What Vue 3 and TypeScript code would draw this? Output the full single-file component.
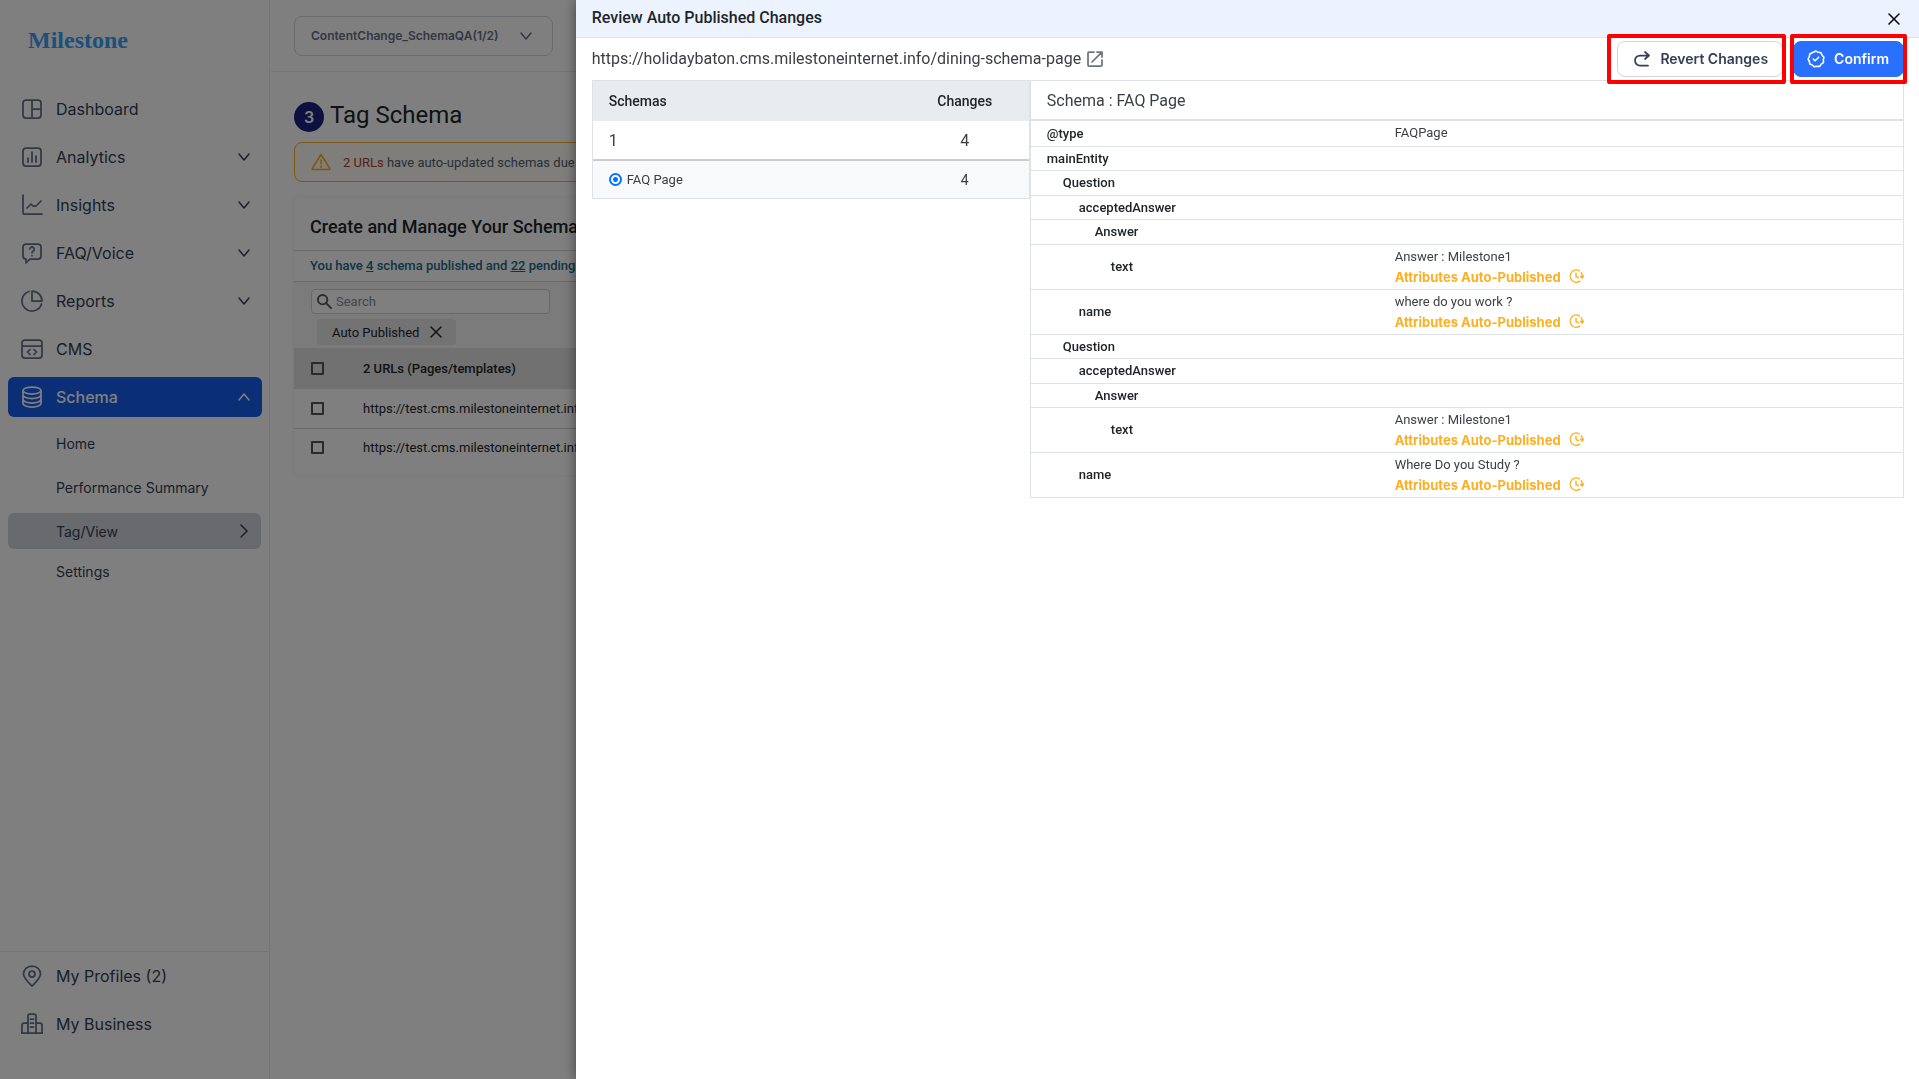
<script setup lang="ts">
import { ref } from 'vue'

interface NavItem {
  label: string
  icon: string
  chevron?: boolean
  active?: boolean
}

interface AttributeRow {
  name: string
  depth: number
  value?: string
  auto?: boolean
}

const navItems: NavItem[] = [
  { label: 'Dashboard', icon: 'dashboard' },
  { label: 'Analytics', icon: 'analytics', chevron: true },
  { label: 'Insights', icon: 'insights', chevron: true },
  { label: 'FAQ/Voice', icon: 'faq', chevron: true },
  { label: 'Reports', icon: 'reports', chevron: true },
  { label: 'CMS', icon: 'cms' },
  { label: 'Schema', icon: 'schema', chevron: true, active: true },
]

const footerItems: NavItem[] = [
  { label: 'My Profiles (2)', icon: 'pin' },
  { label: 'My Business', icon: 'business' },
]

const icons: Record<string, string> = {
  dashboard: 'M5 2h12a3 3 0 0 1 3 3v12a3 3 0 0 1-3 3H5a3 3 0 0 1-3-3V5a3 3 0 0 1 3-3zM11 2v18M11 11h9',
  analytics: 'M5 2h12a3 3 0 0 1 3 3v12a3 3 0 0 1-3 3H5a3 3 0 0 1-3-3V5a3 3 0 0 1 3-3zM7 12v4M11 6v10M15 10v6',
  insights: 'M2 1v18a1 1 0 0 0 1 1h18M6 14l4-4 2 2 3 0 5-5',
  faq: 'M5 2h12a3 3 0 0 1 3 3v9a3 3 0 0 1-3 3H9l-4 4v-4a3 3 0 0 1-3-3V5a3 3 0 0 1 3-3zM8.800 7a2.200 2.200 0 1 1 3.400 2q-1.200.6-1.200 1.800M11 13.500v.2',
  reports: 'M8 1.500A10 10 0 1 0 20.500 14M11 1v10h10A10 10 0 0 0 11 1z',
  cms: 'M4 2h14a3 3 0 0 1 3 3v12a3 3 0 0 1-3 3H4a3 3 0 0 1-3-3V5a3 3 0 0 1 3-3zM1 8h20M9 11.500l-2.500 2.500 2.500 2.500M13 11.500l2.500 2.500-2.500 2.500',
  schema: 'M2 4.500c0-2 4-3.500 9-3.500s9 1.500 9 3.500S16 8 11 8 2 6.500 2 4.500zM2 4.500v13c0 2 4 3.500 9 3.500s9-1.500 9-3.500v-13M2 9c0 2 4 3.500 9 3.500s9-1.500 9-3.500M2 13.500c0 2 4 3.500 9 3.500s9-1.500 9-3.500',
  pin: 'M11 21C7 17 2.500 13 2.500 9a8.500 8 0 0 1 17 0c0 4-4.500 8-8.500 12zM14 9a3 3 0 1 1-6 0 3 3 0 0 1 6 0z',
  business: 'M0 20h22M1 20v-8a2 2 0 0 1 2-2h4M21 20v-8a2 2 0 0 0-2-2h-4M7 20V3a2 2 0 0 1 2-2h4a2 2 0 0 1 2 2v17M9.500 6h3M9.500 10h3M9.500 14h3',
}

const pageUrls = [
  'https://test.cms.milestoneinternet.info/dining',
  'https://test.cms.milestoneinternet.info/events',
]

const rows: AttributeRow[] = [
  { name: '@type', depth: 0, value: 'FAQPage' },
  { name: 'mainEntity', depth: 0 },
  { name: 'Question', depth: 1 },
  { name: 'acceptedAnswer', depth: 2 },
  { name: 'Answer', depth: 3 },
  { name: 'text', depth: 4, value: 'Answer : Milestone1', auto: true },
  { name: 'name', depth: 2, value: 'where do you work ?', auto: true },
  { name: 'Question', depth: 1 },
  { name: 'acceptedAnswer', depth: 2 },
  { name: 'Answer', depth: 3 },
  { name: 'text', depth: 4, value: 'Answer : Milestone1', auto: true },
  { name: 'name', depth: 2, value: 'Where Do you Study ?', auto: true },
]

const search = ref('')
const schema = ref('faq')
</script>

<template>
  <div class="app">
    <aside class="sidebar">
      <a class="logo" href="#">Milestone</a>
      <nav class="nav">
        <a v-for="item in navItems" :key="item.label" href="#" class="nav-item" :class="{ active: item.active }">
          <svg class="nav-icon" viewBox="0 0 22 22"><path :d="icons[item.icon]" /></svg>
          <span class="nav-label">{{ item.label }}</span>
          <svg v-if="item.chevron" class="chevron" :class="{ up: item.active }" viewBox="0 0 14 14"><path d="M2 4l5 6 5-6" /></svg>
        </a>
        <div class="subnav">
          <a href="#" class="sub-item">Home</a>
          <a href="#" class="sub-item">Performance Summary</a>
          <a href="#" class="sub-item current">
            <span>Tag/View</span>
            <svg class="chevron" viewBox="0 0 14 14"><path d="M4 1l6 6-6 6" /></svg>
          </a>
          <a href="#" class="sub-item">Settings</a>
        </div>
      </nav>
      <div class="nav-footer">
        <a v-for="item in footerItems" :key="item.label" href="#" class="nav-item">
          <svg class="nav-icon" viewBox="0 0 22 22"><path :d="icons[item.icon]" /></svg>
          <span class="nav-label">{{ item.label }}</span>
        </a>
      </div>
    </aside>

    <main class="main">
      <header class="topbar">
        <div class="project">
          <select aria-label="Project">
            <option>ContentChange_SchemaQA(1/2)</option>
          </select>
          <svg class="chevron project-chevron" viewBox="0 0 14 14"><path d="M2 4l5 6 5-6" /></svg>
        </div>
      </header>

      <div class="content">
        <h1 class="page-title"><span class="step">3</span>Tag Schema</h1>
        <div class="alert">
          <svg class="alert-icon" viewBox="0 0 20 18"><path d="M10 1.500L1.200 15.500q-.5 1 .8 1h16q1.300 0 .8-1zM10 7v4M10 13v1.500" /></svg>
          <p><a href="#">2 URLs</a> have auto-updated schemas due to content changes</p>
        </div>

        <section class="card">
          <h2>Create and Manage Your Schemas</h2>
          <p class="summary">You have <a href="#">4</a> schema published and <a href="#">22</a> pending</p>
          <div class="filters">
            <label class="search">
              <svg viewBox="0 0 16 16"><circle cx="6" cy="6" r="5" /><path d="M9.500 9.500l5.500 5.500" /></svg>
              <input v-model="search" type="text" placeholder="Search" aria-label="Search" />
            </label>
            <button type="button" class="chip">
              Auto Published
              <svg viewBox="0 0 12 12"><path d="M1 1l10 10M11 1L1 11" /></svg>
            </button>
          </div>
          <table class="urls">
            <thead>
              <tr>
                <th class="tick"><input type="checkbox" aria-label="Select all" /></th>
                <th>2 URLs (Pages/templates)</th>
              </tr>
            </thead>
            <tbody>
              <tr v-for="url in pageUrls" :key="url">
                <td class="tick"><input type="checkbox" :aria-label="url" /></td>
                <td>{{ url }}</td>
              </tr>
            </tbody>
          </table>
        </section>
      </div>
    </main>

    <div class="scrim"></div>

    <section class="drawer" role="dialog" aria-labelledby="drawer-title">
      <header class="drawer-head">
        <h2 id="drawer-title">Review Auto Published Changes</h2>
        <button type="button" class="close" aria-label="Close">
          <svg viewBox="0 0 12 12"><path d="M1 1l10 10M11 1L1 11" /></svg>
        </button>
      </header>

      <div class="drawer-body">
        <div class="toolbar">
          <a class="page-url" href="#">
            <span>https://holidaybaton.cms.milestoneinternet.info/dining-schema-page</span>
            <svg viewBox="0 0 16 16"><path d="M7 1H2a1 1 0 0 0-1 1v12a1 1 0 0 0 1 1h12a1 1 0 0 0 1-1V9M10 1h5v5M15 1L5 11" /></svg>
          </a>
          <div class="actions">
            <div class="marked marked-wide">
              <button type="button" class="btn">
                <svg viewBox="0 0 18 18"><path d="M12 2l4 3.500-4 3.500M16 5.500H7a5 5 0 0 0 0 10h8" /></svg>
                Revert Changes
              </button>
            </div>
            <div class="marked">
              <button type="button" class="btn primary">
                <svg viewBox="0 0 20 20"><path d="M10 1.200l2.600 1.400 3 .5 1.200 2.700 2 2.200-.6 3 .1 3-2.500 1.700-1.700 2.500-3-.1-3 .6-2.300-2-2.700-1.200-.5-3L1.200 10l1.400-2.600.5-3 2.700-1.300zM7 10l2 2 4-4" /></svg>
                Confirm
              </button>
            </div>
          </div>
        </div>

        <div class="panes">
          <div class="pane-left">
            <table class="schemas">
              <thead>
                <tr><th>Schemas</th><th class="count">Changes</th></tr>
              </thead>
              <tbody>
                <tr class="total"><td>1</td><td class="count">4</td></tr>
                <tr class="selected">
                  <td>
                    <label class="choice"><input v-model="schema" type="radio" name="schema" value="faq" />FAQ Page</label>
                  </td>
                  <td class="count">4</td>
                </tr>
              </tbody>
            </table>
          </div>
          <div class="pane-right">
            <h3>Schema : FAQ Page</h3>
            <table class="attributes">
              <tbody>
                <tr v-for="(row, i) in rows" :key="i" :class="{ tall: row.auto }">
                  <th scope="row" :class="'depth-' + row.depth">{{ row.name }}</th>
                  <td>
                    <div>{{ row.value }}</div>
                    <div v-if="row.auto" class="auto">
                      Attributes Auto-Published
                      <svg viewBox="0 0 16 16"><path d="M11 2A6.500 6.500 0 1 0 11.500 13M13 4q1.500 1.800 1.500 4.200M12.500 7.800h3L14 9.800zM7.500 4.500V8l2.500 1.200" /></svg>
                    </div>
                  </td>
                </tr>
              </tbody>
            </table>
          </div>
        </div>
      </div>
    </section>
  </div>
</template>

<style>
body {
  margin: 0;
}
</style>

<style scoped>
* {
  box-sizing: border-box;
}
.app {
  display: flex;
  min-height: 100vh;
  background: #fff;
  color: #212529;
  font-family: Roboto, sans-serif;
  font-size: 13px;
  overflow: hidden;
}
h1, h2, h3, p {
  margin: 0;
}
a {
  color: inherit;
  text-decoration: none;
}
svg {
  fill: none;
  stroke: currentColor;
  flex: none;
  stroke-linecap: round;
  stroke-linejoin: round;
}
button {
  font: inherit;
  color: inherit;
  border: 0;
  padding: 0;
  background: none;
}
table {
  border-collapse: collapse;
  width: 100%;
}
th {
  text-align: left;
  font-weight: 500;
}
td, th {
  padding: 0;
}

/* Sidebar */
.sidebar {
  display: flex;
  flex-direction: column;
  width: 270px;
  flex: none;
  border-right: 1px solid #ececee;
  font-family: Inter, sans-serif;
  color: #344054;
}
.logo {
  padding: 20px 28px 0;
  height: 89px;
  font-family: "Liberation Serif", serif;
  font-weight: 700;
  font-size: 24px;
  line-height: 40px;
  color: #38a0f8;
}
.nav {
  flex: 1;
}
.nav-item {
  display: flex;
  align-items: center;
  gap: 13px;
  height: 40px;
  margin: 0 7px 8px 8px;
  padding: 0 11px 0 13px;
  border-radius: 6px;
  font-size: 16px;
}
.nav-item.active {
  background: #155eef;
  color: #fff;
  font-weight: 500;
}
.nav-icon {
  width: 22px;
  height: 22px;
  stroke-width: 1.75;
  stroke: #667085;
}
.active .nav-icon {
  stroke: #fff;
}
.nav-label {
  flex: 1;
}
.chevron {
  width: 14px;
  height: 14px;
  stroke-width: 1.5;
}
.up {
  transform: rotate(180deg);
}
.sub-item {
  display: flex;
  align-items: center;
  justify-content: space-between;
  height: 36px;
  margin: 0 8px 8px;
  padding: 0 10px 0 48px;
  border-radius: 6px;
  font-size: 14px;
}
.sub-item.current {
  background: #d0d5dd;
  margin-bottom: 4px;
}
.nav-footer {
  border-top: 1px solid #ececee;
  padding: 4px 0 27px;
}

/* Page behind the drawer */
.main {
  flex: 1;
  min-width: 0;
}
.topbar {
  height: 72px;
  padding: 16px 24px;
  border-bottom: 1px solid #ececee;
}
.project {
  position: relative;
  width: 259px;
}
.project select {
  appearance: none;
  width: 100%;
  height: 40px;
  padding: 0 40px 2px 16px;
  border: 1px solid #d0d5dd;
  border-radius: 8px;
  background: #fff;
  font: 600 12px Inter, sans-serif;
  color: #667085;
}
.project-chevron {
  position: absolute;
  right: 20px;
  top: 13px;
  color: #667085;
}
.content {
  padding: 26px 24px;
}
.page-title {
  display: flex;
  align-items: center;
  gap: 6px;
  height: 34px;
  font-size: 24px;
  font-weight: 400;
}
.step {
  width: 30px;
  height: 30px;
  margin-top: 4px;
  border-radius: 50%;
  background: #1a237e;
  color: #fff;
  font: 600 16px/30px Inter, sans-serif;
  text-align: center;
}
.alert {
  display: flex;
  align-items: center;
  gap: 12px;
  height: 40px;
  margin-top: 10px;
  padding: 0 16px;
  border: 1px solid #fdb022;
  border-radius: 8px;
  background: #fffcf5;
  color: #52616f;
  white-space: nowrap;
}
.alert a {
  color: #b8402c;
}
.alert-icon {
  width: 20px;
  height: 18px;
  stroke: #fdb022;
  stroke-width: 1.5;
}
.card {
  margin-top: 16px;
  padding-bottom: 8px;
  border-radius: 4px;
  box-shadow: 0 0 4px rgba(0, 0, 0, 0.08);
}
.card h2 {
  height: 52px;
  padding: 6px 16px 0;
  font-size: 18px;
  line-height: 46px;
  font-weight: 500;
}
.summary {
  height: 32px;
  padding: 0 16px;
  border-top: 1px solid #d5d5d5;
  border-bottom: 1px solid #d5d5d5;
  line-height: 30px;
  font-weight: 500;
  color: #1b6a8c;
}
.summary a {
  text-decoration: underline;
}
.filters {
  display: flex;
  flex-direction: column;
  align-items: flex-start;
  gap: 5px;
  height: 66px;
  padding: 7px 17px 0;
  background: #f7f7f7;
}
.search {
  display: flex;
  align-items: center;
  gap: 4px;
  width: 239px;
  height: 25px;
  padding: 0 6px 0 5px;
  border: 1px solid #ced4da;
  border-radius: 4px;
  background: #fff;
}
.search svg {
  width: 15px;
  height: 15px;
  stroke: #555;
  stroke-width: 2;
}
.search input {
  flex: 1;
  min-width: 0;
  border: 0;
  padding: 0;
  background: none;
  font: 13px Roboto, sans-serif;
}
.search input::placeholder {
  color: #868e96;
}
.chip {
  display: flex;
  align-items: center;
  gap: 11px;
  height: 26px;
  margin-left: 6px;
  padding: 0 14px 0 15px;
  border-radius: 4px;
  background: #e6e6e6;
}
.chip svg {
  width: 12px;
  height: 12px;
  stroke-width: 1.5;
}
.urls th {
  height: 41px;
  background: #e2e2e2;
}
.urls td {
  height: 39px;
}
.urls tbody tr + tr {
  border-top: 1px solid #d0d0d0;
}
.urls .tick {
  width: 69px;
  padding-left: 17px;
}
.urls input {
  appearance: none;
  display: block;
  width: 13px;
  height: 13px;
  margin: 0;
  border: 2px solid #555;
  border-radius: 1px;
}
.scrim {
  position: fixed;
  inset: 0;
  background: rgba(0, 0, 0, 0.5);
}

/* Drawer */
.drawer {
  position: fixed;
  top: 0;
  right: 0;
  bottom: 0;
  width: 70%;
  background: #fff;
  box-shadow: 0 0 12px rgba(0, 0, 0, 0.5);
}
.drawer-head {
  display: flex;
  align-items: center;
  justify-content: space-between;
  height: 38px;
  padding: 0 19px 0 16px;
  background: #ecf3ff;
  border-bottom: 1px solid #e0e4ea;
}
.drawer-head h2 {
  padding-bottom: 2px;
  font-size: 16px;
  line-height: 34px;
  font-weight: 500;
}
.close {
  width: 12px;
  height: 12px;
}
.close svg {
  display: block;
  stroke: #000;
  stroke-width: 1.5;
}
.drawer-body {
  padding: 0 15px 0 16px;
}
.toolbar {
  display: flex;
  justify-content: space-between;
  align-items: center;
  height: 42px;
}
.page-url {
  display: flex;
  align-items: center;
  gap: 6px;
  padding-bottom: 1px;
  font-size: 16px;
  color: #3a3f44;
}
.page-url svg {
  width: 16px;
  height: 16px;
  stroke: #6c757d;
  stroke-width: 1.75;
}
.actions {
  display: flex;
  gap: 10px;
}
.marked {
  position: relative;
}
.marked::after {
  content: "";
  position: absolute;
  inset: -7px -3px;
  border: 4px solid #f00;
  border-radius: 2px;
  pointer-events: none;
}
.marked-wide::after {
  left: -10px;
}
.btn {
  display: flex;
  align-items: center;
  gap: 9px;
  height: 36px;
  padding: 0 14px 1px 15px;
  border: 1px solid #d0d5dd;
  border-radius: 8px;
  background: #fff;
  color: #344054;
  font: 600 14px Inter, sans-serif;
}
.btn svg {
  width: 18px;
  height: 18px;
  stroke-width: 1.75;
}
.btn.primary {
  padding: 0 14px 1px 13px;
  border-color: #2970ff;
  background: #2970ff;
  color: #fff;
}
.panes {
  display: flex;
  align-items: flex-start;
}
.pane-left {
  flex: 1;
  border: 1px solid #dee2e6;
}
.pane-right {
  flex: 2;
  border: 1px solid #dee2e6;
}
.schemas th {
  height: 40px;
  background: #e9ecef;
}
.schemas th, .schemas td {
  padding-left: 16px;
  font-size: 14px;
}
.schemas .count {
  width: 128px;
  padding: 0;
  text-align: center;
}
.schemas .total td {
  height: 39px;
  font-size: 16px;
  color: #3a3f44;
  border-bottom: 2px solid #ccc;
}
.schemas .selected td {
  height: 38px;
  font-size: 14px;
  color: #3a3f44;
  background: #f8f9fa;
}
.choice {
  display: flex;
  align-items: center;
  gap: 5px;
  font-size: 13px;
}
.choice input {
  appearance: none;
  width: 13px;
  height: 13px;
  margin: 0;
  border: 2px solid #0075ff;
  border-radius: 50%;
}
.choice input:checked {
  background: radial-gradient(circle, #0075ff 2px, #fff 3px);
}
.pane-right h3 {
  height: 40px;
  padding-left: 16px;
  border-bottom: 2px solid #dee2e6;
  font-size: 16px;
  line-height: 39px;
  font-weight: 400;
  color: #3a3f44;
}
.attributes tr {
  height: 25px;
  border-bottom: 1px solid #dee2e6;
}
.attributes tr:nth-child(even) {
  height: 24px;
}
.attributes tr.tall {
  height: 45px;
}
.attributes tr:last-child {
  border-bottom: 0;
}
.attributes th {
  width: 40%;
}
.attributes td {
  padding-left: 15px;
  line-height: 20px;
  color: #3a3f44;
}
.attributes .depth-0 {
  padding-left: 16px;
}
.attributes .depth-1 {
  padding-left: 32px;
}
.attributes .depth-2 {
  padding-left: 48px;
}
.attributes .depth-3 {
  padding-left: 64px;
}
.attributes .depth-4 {
  padding-left: 80px;
}
.auto {
  display: flex;
  align-items: center;
  gap: 8px;
  font-weight: 700;
  font-family: Inter, sans-serif;
  color: #fdb022;
}
.auto svg {
  width: 15px;
  height: 15px;
  stroke-width: 1.5;
}
</style>
